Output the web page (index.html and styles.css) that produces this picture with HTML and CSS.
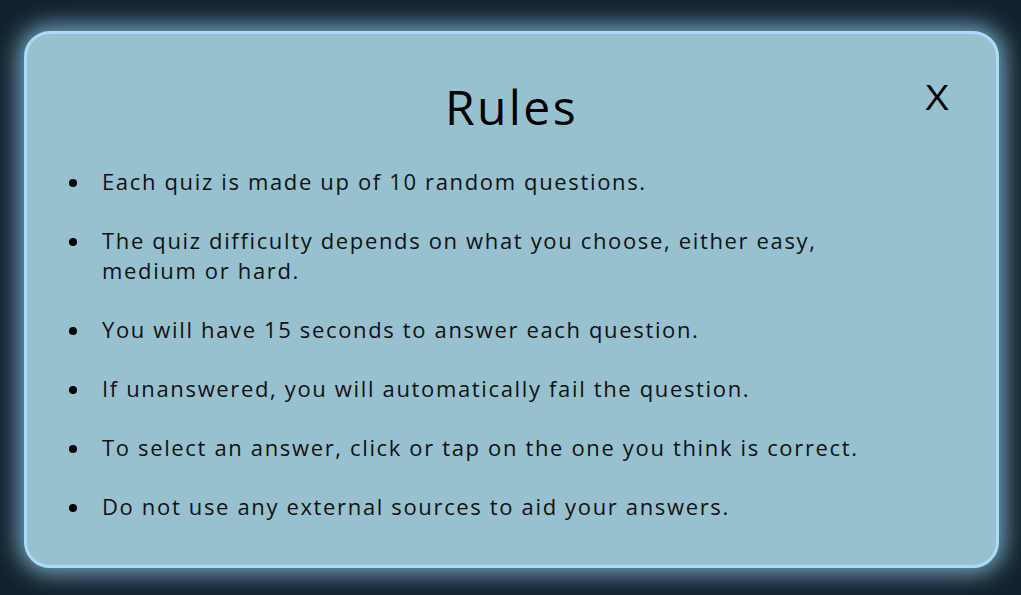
FILE: index.html
```html
<!DOCTYPE html>
<html lang="en">
<head>
<meta charset="utf-8">
<title>Rules</title>
<link rel="stylesheet" href="styles.css">
</head>
<body>
<div class="page">
  <section class="modal">
    <button class="close" type="button">X</button>
    <h1 class="title">Rules</h1>
    <ul class="rules">
      <li>Each quiz is made up of 10 random questions.</li>
      <li>The quiz difficulty depends on what you choose, either easy,<br>medium or hard.</li>
      <li>You will have 15 seconds to answer each question.</li>
      <li>If unanswered, you will automatically fail the question.</li>
      <li>To select an answer, click or tap on the one you think is correct.</li>
      <li>Do not use any external sources to aid your answers.</li>
    </ul>
  </section>
</div>
</body>
</html>
```

FILE: styles.css
```css
html, body {
  margin: 0;
  padding: 0;
  background: #12232f;
  height: 100%;
}
body {
  font-family: "Open Sans", "Noto Sans", sans-serif;
  color: #111;
}
.page {
  padding: 31px 22px 27px 24px;
}
.modal {
  position: relative;
  box-sizing: border-box;
  height: 537px;
  background: #97c1cf;
  border: 3px solid #a9dbfb;
  border-radius: 26px;
  box-shadow: 0 0 22px 6px rgba(150, 205, 235, 0.75);
  padding: 38px 40px 0 40px;
}
.title {
  margin: 0;
  text-align: center;
  font-weight: 400;
  font-size: 48px;
  line-height: 70px;
  letter-spacing: 2.4px;
  color: #000;
}
.close {
  position: absolute;
  top: 41px;
  right: 47px;
  background: none;
  border: 0;
  padding: 0;
  font-family: inherit;
  font-size: 34px;
  line-height: 44px;
  color: #000;
  cursor: pointer;
  transform: scaleX(1.18);
  transform-origin: right center;
}
.rules {
  list-style: none;
  margin: 24px 0 0 0;
  padding: 0;
}
.rules li {
  display: grid;
  grid-template-columns: 35px 1fr;
  font-size: 22px;
  line-height: 30px;
  letter-spacing: 1.65px;
  margin-bottom: 29px;
  color: #111;
}
.rules li::before {
  content: "";
  width: 8px;
  height: 8px;
  border-radius: 50%;
  background: #000;
  margin: 13px 0 0 2px;
}
```
